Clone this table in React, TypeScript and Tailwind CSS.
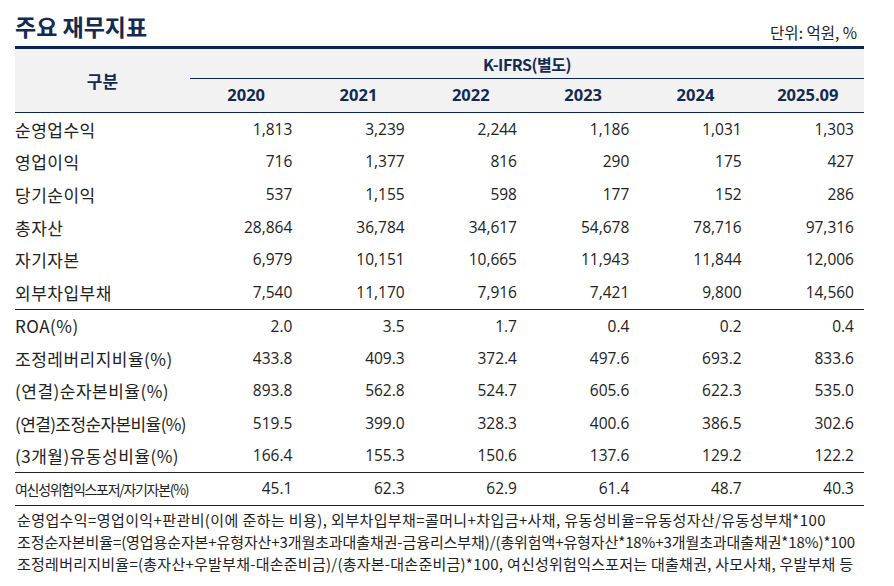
import React from "react";

const years = ["2020", "2021", "2022", "2023", "2024", "2025.09"];

const group1: [string, string[]][] = [
  ["순영업수익", ["1,813", "3,239", "2,244", "1,186", "1,031", "1,303"]],
  ["영업이익", ["716", "1,377", "816", "290", "175", "427"]],
  ["당기순이익", ["537", "1,155", "598", "177", "152", "286"]],
  ["총자산", ["28,864", "36,784", "34,617", "54,678", "78,716", "97,316"]],
  ["자기자본", ["6,979", "10,151", "10,665", "11,943", "11,844", "12,006"]],
  ["외부차입부채", ["7,540", "11,170", "7,916", "7,421", "9,800", "14,560"]],
];

const group2: [string, string[]][] = [
  ["ROA(%)", ["2.0", "3.5", "1.7", "0.4", "0.2", "0.4"]],
  ["조정레버리지비율(%)", ["433.8", "409.3", "372.4", "497.6", "693.2", "833.6"]],
  ["(연결)순자본비율(%)", ["893.8", "562.8", "524.7", "605.6", "622.3", "535.0"]],
  ["(연결)조정순자본비율(%)", ["519.5", "399.0", "328.3", "400.6", "386.5", "302.6"]],
  ["(3개월)유동성비율(%)", ["166.4", "155.3", "150.6", "137.6", "129.2", "122.2"]],
];

const KR = { fontFamily: '"Noto Sans CJK KR", "Noto Sans", sans-serif' };
const NUM = { fontFamily: '"Open Sans", "Noto Sans CJK KR", sans-serif' };

function Row({ label, vals, small }: { label: string; vals: string[]; small?: boolean }) {
  const tight = label === "(연결)조정순자본비율(%)";
  return (
    <div className="flex items-center">
      <div
        className={
          small
            ? "w-[175px] text-[14px] tracking-[-1.3px] text-[#222] whitespace-nowrap"
            : tight
            ? "w-[175px] text-[17px] tracking-[-0.6px] text-[#222] whitespace-nowrap"
            : "w-[175px] text-[17px] tracking-[0.5px] text-[#222] whitespace-nowrap"
        }
        style={KR}
      >
        {label}
      </div>
      {vals.map((v, i) => (
        <div
          key={i}
          className="flex-1 pr-[10px] text-right text-[15.5px] text-[#222]"
          style={NUM}
        >
          {v}
        </div>
      ))}
    </div>
  );
}

export default function App() {
  return (
    <div className="w-[894px] h-[586px] bg-white px-[15px] pt-[11px] overflow-hidden" style={KR}>
      <div className="w-[849px] flex items-end justify-between mb-[4px]">
        <div className="text-[23px] leading-[31px] font-bold text-[#132a52]" style={KR}>
          주요 재무지표
        </div>
        <div className="text-[15.5px] leading-[20px] text-[#222] pr-[7px]" style={KR}>
          단위: 억원, %
        </div>
      </div>

      <div className="w-[849px] border-t-[3px] border-[#0b2656]">
        {/* header */}
        <div className="flex bg-[#f2f2f2] border-b border-[#0b2656] h-[64px]">
          <div className="w-[175px] flex items-center justify-center text-[17px] font-bold text-[#132a52]" style={KR}>
            구분
          </div>
          <div className="flex-1 flex flex-col">
            <div className="h-[30px] border-b border-[#0b2656] flex items-center justify-center text-[16px] font-bold text-[#132a52] tracking-[-0.5px]" style={KR}>
              K-IFRS(별도)
            </div>
            <div className="flex-1 flex items-center">
              {years.map((y) => (
                <div key={y} className="flex-1 text-center text-[16.5px] font-bold text-[#132a52]" style={NUM}>
                  {y}
                </div>
              ))}
            </div>
          </div>
        </div>

        {/* group 1 */}
        <div className="grid grid-rows-6 h-[197px] border-b border-[#222]">
          {group1.map(([l, v]) => (
            <Row key={l} label={l} vals={v} />
          ))}
        </div>
        {/* group 2 */}
        <div className="grid grid-rows-5 h-[163px] border-b border-[#222]">
          {group2.map(([l, v]) => (
            <Row key={l} label={l} vals={v} />
          ))}
        </div>
        {/* group 3 */}
        <div className="grid grid-rows-1 h-[33px] border-b border-[#222]">
          <Row label="여신성위험익스포저/자기자본(%)" vals={["45.1", "62.3", "62.9", "61.4", "48.7", "40.3"]} small />
        </div>
      </div>

      <div className="pt-[3px] pl-[2px] text-[15px] leading-[22px] text-[#222] whitespace-nowrap" style={KR}>
        <div className="tracking-[0.4px]">순영업수익=영업이익+판관비(이에 준하는 비용), 외부차입부채=콜머니+차입금+사채, 유동성비율=유동성자산/유동성부채*100</div>
        <div className="tracking-[-0.1px]">조정순자본비율=(영업용순자본+유형자산+3개월초과대출채권-금융리스부채)/(총위험액+유형자산*18%+3개월초과대출채권*18%)*100</div>
        <div className="tracking-[0.25px]">조정레버리지비율=(총자산+우발부채-대손준비금)/(총자본-대손준비금)*100, 여신성위험익스포저는 대출채권, 사모사채, 우발부채 등</div>
      </div>
    </div>
  );
}
